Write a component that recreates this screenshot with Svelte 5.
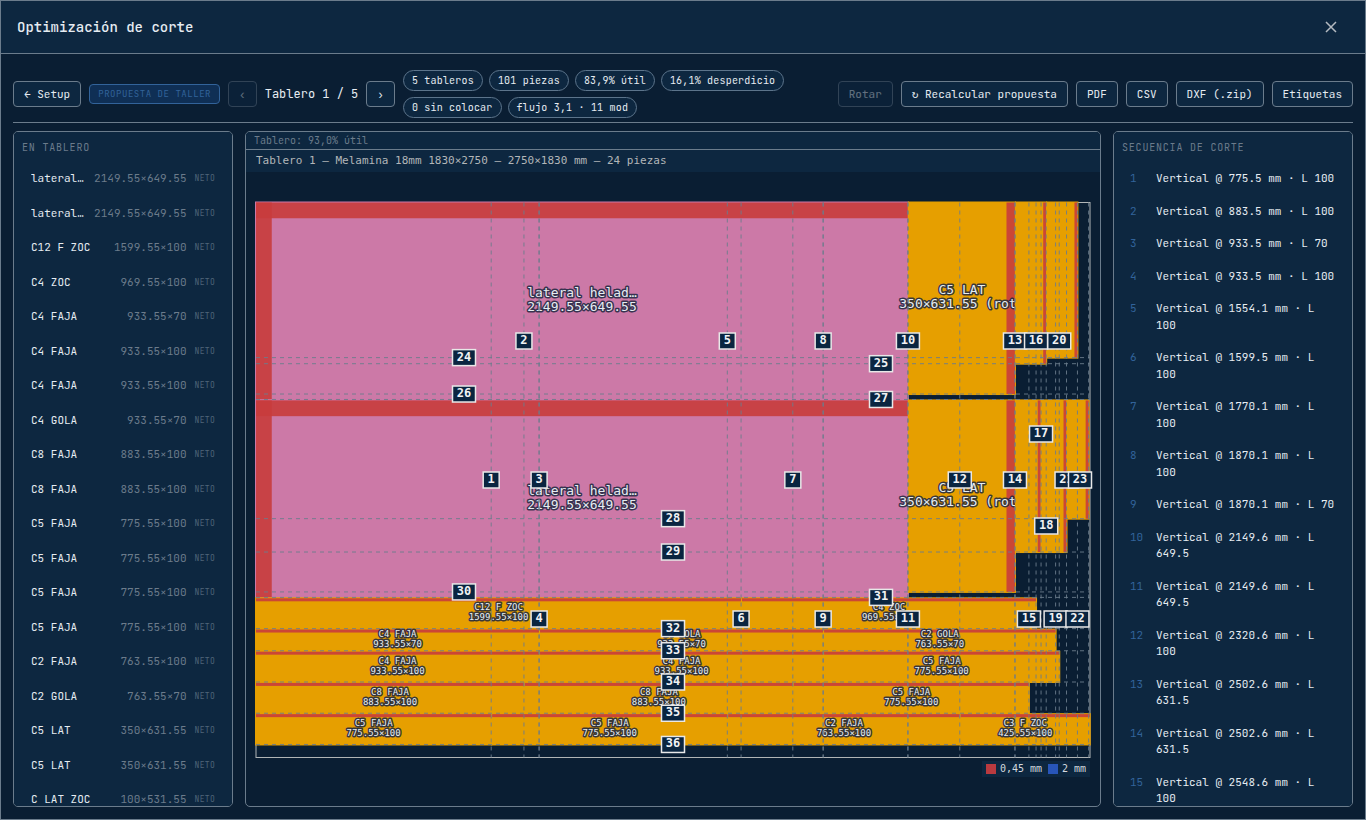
<script lang="ts">
type Piece = { x: number; y: number; w: number; h: number; edge: string; label?: string[]; side?: boolean };
type Cut = { axis: "v" | "h"; pos: number; bx: number; by: number };

const chips = ["5 tableros", "101 piezas", "83,9% útil", "16,1% desperdicio", "0 sin colocar", "flujo 3,1 · 11 mod"];

const items: [string, string][] = [
  ["lateral heladera", "2149.55×649.55"],
  ["lateral heladera", "2149.55×649.55"],
  ["C12 F ZOC", "1599.55×100"],
  ["C4 ZOC", "969.55×100"],
  ["C4 FAJA", "933.55×70"],
  ["C4 FAJA", "933.55×100"],
  ["C4 FAJA", "933.55×100"],
  ["C4 GOLA", "933.55×70"],
  ["C8 FAJA", "883.55×100"],
  ["C8 FAJA", "883.55×100"],
  ["C5 FAJA", "775.55×100"],
  ["C5 FAJA", "775.55×100"],
  ["C5 FAJA", "775.55×100"],
  ["C5 FAJA", "775.55×100"],
  ["C2 FAJA", "763.55×100"],
  ["C2 GOLA", "763.55×70"],
  ["C5 LAT", "350×631.55"],
  ["C5 LAT", "350×631.55"],
  ["C LAT ZOC", "100×531.55"],
];

const steps = [
  "775.5 mm · L 100",
  "883.5 mm · L 100",
  "933.5 mm · L 70",
  "933.5 mm · L 100",
  "1554.1 mm · L 100",
  "1599.5 mm · L 100",
  "1770.1 mm · L 100",
  "1870.1 mm · L 100",
  "1870.1 mm · L 70",
  "2149.6 mm · L 649.5",
  "2149.6 mm · L 649.5",
  "2320.6 mm · L 100",
  "2502.6 mm · L 631.5",
  "2502.6 mm · L 631.5",
  "2548.6 mm · L 100",
];

// board geometry, in mm
const BOARD_W = 2750;
const BOARD_H = 1830;
const KERF = 3;
const scale = 834 / BOARD_W;
const px = (mm: number) => 10 + mm * scale;
const py = (mm: number) => 52.5 + mm * scale;

function strip(y: number, h: number, parts: [string, number][]): Piece[] {
  let x = 0;
  return parts.map(([name, w]) => {
    const piece = { x, y, w, h, edge: "top", label: [name, `${w}×${h}`] };
    x += w + KERF;
    return piece;
  });
}

const rotated = ["C5 LAT", "350×631.55 (rot…"];

const pieces: Piece[] = [
  { x: 0, y: 0, w: 2149.55, h: 649.55, edge: "both", label: ["lateral helad…", "2149.55×649.55"], side: true },
  { x: 0, y: 652.55, w: 2149.55, h: 649.55, edge: "both", label: ["lateral helad…", "2149.55×649.55"], side: true },
  { x: 2152.6, y: 0, w: 350, h: 631.55, edge: "right", label: rotated },
  { x: 2152.6, y: 652.55, w: 350, h: 631.55, edge: "right", label: rotated },
  { x: 2505.6, y: 0, w: 100, h: 531.55, edge: "right" },
  { x: 2608.6, y: 0, w: 100, h: 511.55, edge: "right" },
  { x: 2505.6, y: 652.55, w: 82, h: 500, edge: "right" },
  { x: 2590.6, y: 652.55, w: 82, h: 500, edge: "right" },
  { x: 2675.6, y: 652.55, w: 70, h: 390, edge: "right" },
  ...strip(1305.1, 100, [["C12 F ZOC", 1599.55], ["C4 ZOC", 969.55]]),
  ...strip(1408.1, 70, [["C4 FAJA", 933.55], ["C4 GOLA", 933.55], ["C2 GOLA", 763.55]]),
  ...strip(1481.1, 100, [["C4 FAJA", 933.55], ["C4 FAJA", 933.55], ["C5 FAJA", 775.55]]),
  ...strip(1584.1, 100, [["C8 FAJA", 883.55], ["C8 FAJA", 883.55], ["C5 FAJA", 775.55]]),
  ...strip(1687.1, 100, [["C5 FAJA", 775.55], ["C5 FAJA", 775.55], ["C2 FAJA", 763.55], ["C3 F ZOC", 425.55]]),
];

function v(pos: number, by: number, bx = px(pos)): Cut {
  return { axis: "v", pos, bx, by };
}

function h(pos: number, bx: number): Cut {
  return { axis: "h", pos, bx, by: py(pos) };
}

// badge rows and columns on the drawing
const TOP = 191;
const MID = 330;
const LOW = 469;
const LEFT = 218;
const CENTER = 427;
const RIGHT = 635;

const cuts: Cut[] = [
  v(775.5, MID),
  v(883.5, TOP),
  v(933.5, MID),
  v(933.5, LOW),
  v(1554.1, TOP),
  v(1599.5, LOW),
  v(1770.1, MID),
  v(1870.1, TOP),
  v(1870.1, LOW),
  v(2149.6, TOP),
  v(2149.6, LOW),
  v(2320.6, MID),
  v(2502.6, TOP),
  v(2502.6, MID),
  v(2548.6, LOW),
  v(2572.1, TOP),
  v(2588.6, 284),
  v(2605.6, 376),
  v(2636.6, LOW),
  v(2648.6, TOP),
  v(2672.6, MID),
  v(2708.6, LOW),
  v(2745.6, MID, 834),
  h(511.5, LEFT),
  h(531.5, RIGHT),
  h(631.5, LEFT),
  h(649.5, RIGHT),
  h(1042.5, CENTER),
  h(1152.5, CENTER),
  h(1284.1, LEFT),
  h(1302.1, RIGHT),
  h(1405.1, CENTER),
  h(1478.1, CENTER),
  h(1581.1, CENTER),
  h(1684.1, CENTER),
  h(1787.1, CENTER),
];

const band = (p: Piece) => Math.max(3, Math.min(p.w, p.h) * scale * 0.08);
const badgeWidth = (n: number) => (n > 9 ? 23 : 16);
</script>

<div class="modal" role="dialog" aria-labelledby="modal-title">
  <header class="head">
    <h1 id="modal-title">Optimización de corte</h1>
    <button class="close" aria-label="Cerrar">
      <svg viewBox="0 0 12 12" width="12" height="12"><path d="M1 1 11 11M11 1 1 11" /></svg>
    </button>
  </header>

  <div class="body">
    <div class="toolbar">
      <button class="btn">← Setup</button>
      <span class="tag">Propuesta de taller</span>
      <button class="btn" disabled aria-label="Tablero anterior">‹</button>
      <span class="pager">Tablero 1 / 5</span>
      <button class="btn" aria-label="Tablero siguiente">›</button>
      <div class="chips">
        {#each chips as chip}
          <span class="chip">{chip}</span>
        {/each}
      </div>
      <button class="btn" disabled>Rotar</button>
      <button class="btn">↻ Recalcular propuesta</button>
      <button class="btn">PDF</button>
      <button class="btn">CSV</button>
      <button class="btn">DXF (.zip)</button>
      <button class="btn">Etiquetas</button>
    </div>

    <main class="columns">
      <aside class="panel">
        <h2>En tablero</h2>
        <ul class="items">
          {#each items as [name, size]}
            <li>
              <span class="name">{name}</span>
              <span class="size">{size}</span>
              <span class="net">NETO</span>
            </li>
          {/each}
        </ul>
      </aside>

      <section class="board">
        <div class="usage">Tablero: 93,0% útil</div>
        <svg class="drawing" viewBox="0 0 854 656" role="img" aria-label="Plano de corte del tablero 1">
          <rect class="strip" x="0" y="0" width="854" height="22" />
          <text class="caption" x="10" y="14">Tablero 1 — Melamina 18mm 1830×2750 — 2750×1830 mm — 24 piezas</text>

          <rect class="outline" x={px(0)} y={py(0)} width={BOARD_W * scale} height={BOARD_H * scale} />

          {#each pieces as p}
            {@const b = band(p)}
            {@const w = p.w * scale}
            {@const ht = p.h * scale}
            {@const cx = px(p.x) + w / 2}
            {@const cy = py(p.y) + ht / 2}
            <rect class={p.side ? "piece side" : "piece"} x={px(p.x)} y={py(p.y)} width={w} height={ht} />
            {#if p.edge !== "right"}
              <rect class="edge" x={px(p.x)} y={py(p.y)} width={w} height={b} />
            {/if}
            {#if p.edge === "both"}
              <rect class="edge" x={px(p.x)} y={py(p.y)} width={b} height={ht} />
            {/if}
            {#if p.edge === "right"}
              <rect class="edge" x={px(p.x) + w - b} y={py(p.y)} width={b} height={ht} />
            {/if}
            {#if p.label}
              {@const big = p.h > 200}
              <text class={big ? "label" : "label small"} x={cx} y={cy - (big ? 4 : 3)}>{p.label[0]}</text>
              <text class={big ? "label" : "label small"} x={cx} y={cy + (big ? 10 : 7)}>{p.label[1]}</text>
            {/if}
          {/each}

          {#each cuts as cut}
            {#if cut.axis === "v"}
              <line class="cut" x1={px(cut.pos)} x2={px(cut.pos)} y1={py(0)} y2={py(BOARD_H)} />
            {:else}
              <line class="cut" x1={px(0)} x2={px(BOARD_W)} y1={py(cut.pos)} y2={py(cut.pos)} />
            {/if}
          {/each}

          {#each cuts as cut, i}
            {@const bw = badgeWidth(i + 1)}
            <rect class="badge" x={cut.bx - bw / 2} y={cut.by - 8} width={bw} height="16" />
            <text class="number" x={cut.bx} y={cut.by + 3}>{i + 1}</text>
          {/each}

          <rect class="strip" x="736" y="611" width="108" height="16" />
          <rect class="key-thin" x="740" y="614" width="10" height="10" />
          <text class="key" x="754" y="622">0,45 mm</text>
          <rect class="key-thick" x="802" y="614" width="10" height="10" />
          <text class="key" x="816" y="622">2 mm</text>
        </svg>
      </section>

      <aside class="panel">
        <h2>Secuencia de corte</h2>
        <ol class="steps">
          {#each steps as step, i}
            <li>
              <span class="index">{i + 1}</span>
              <span>Vertical @ {step}</span>
            </li>
          {/each}
        </ol>
      </aside>
    </main>
  </div>
</div>

<style>
  :global(body) {
    background: #0a1e33;
  }

  .modal {
    --bg: #0a1e33;
    --surface: #0d2740;
    --line: #6b7c8c;
    --text: #e6ecf2;
    --muted: #6b7b8b;
    --blue: #32639a;
    --mono: "JetBrains Mono", "DejaVu Sans Mono", monospace;
    display: flex;
    flex-direction: column;
    box-sizing: border-box;
    height: 100vh;
    border: 1px solid var(--line);
    background: var(--bg);
    color: var(--text);
    font-family: var(--mono);
    font-size: 11px;
    line-height: 1.5;
  }

  .head {
    display: flex;
    align-items: center;
    justify-content: space-between;
    padding: 12px 16px;
    background: var(--surface);
    border-bottom: 1px solid var(--line);
  }

  h1 {
    margin: 0;
    font-size: 14px;
    font-weight: 500;
  }

  .close {
    display: grid;
    place-items: center;
    width: 36px;
    height: 28px;
    padding: 0;
    background: none;
    border: 0;
    cursor: pointer;
  }

  .close path {
    fill: none;
    stroke: #b4bac0;
    stroke-width: 1.5;
  }

  .body {
    flex: 1;
    display: flex;
    flex-direction: column;
    gap: 8px;
    min-height: 0;
    padding: 12px;
  }

  .toolbar {
    display: flex;
    align-items: center;
    gap: 8px;
    padding: 4px 0;
    border-bottom: 1px solid var(--line);
  }

  .btn {
    flex-shrink: 0;
    padding: 5px 10px;
    background: var(--surface);
    border: 1px solid var(--line);
    border-radius: 4px;
    color: var(--text);
    font: inherit;
    line-height: 14px;
    cursor: pointer;
  }

  .btn:disabled {
    opacity: 0.4;
    cursor: default;
  }

  .tag {
    flex-shrink: 0;
    padding: 2px 8px;
    background: #0f2f55;
    border: 1px solid var(--blue);
    border-radius: 4px;
    color: var(--blue);
    font-size: 9px;
    line-height: 14px;
    letter-spacing: 0.06em;
    text-transform: uppercase;
  }

  .pager {
    flex-shrink: 0;
    font-size: 12px;
  }

  .chips {
    flex: 1;
    display: flex;
    flex-wrap: wrap;
    gap: 6px;
  }

  .chip {
    padding: 3px 8px;
    background: var(--surface);
    border: 1px solid #5c748b;
    border-radius: 11px;
    font-size: 10px;
    line-height: 13px;
    letter-spacing: 0.02em;
  }

  .columns {
    flex: 1;
    display: grid;
    grid-template-columns: 220px 1fr 240px;
    grid-template-rows: minmax(0, 1fr);
    gap: 12px;
    min-height: 0;
  }

  .panel,
  .board {
    border: 1px solid var(--line);
    border-radius: 5px;
    overflow: hidden;
  }

  .panel {
    padding: 8px 8px 0;
    background: var(--surface);
    overflow-y: auto;
    scrollbar-width: none;
  }

  h2 {
    margin: 0 0 6px;
    color: var(--muted);
    font-size: 10px;
    font-weight: 400;
    letter-spacing: 0.08em;
    text-transform: uppercase;
  }

  ul,
  ol {
    margin: 0;
    padding: 0;
    list-style: none;
  }

  li {
    display: flex;
    gap: 8px;
    padding: 8px;
  }

  .items li {
    border: 1px solid transparent;
  }

  .steps {
    padding-top: 1px;
  }

  .name {
    flex: 1;
    min-width: 0;
    overflow: hidden;
    text-overflow: ellipsis;
    white-space: nowrap;
  }

  .size {
    color: var(--muted);
  }

  .net {
    align-self: center;
    color: #506579;
    font-size: 8px;
    letter-spacing: 0.04em;
  }

  .index {
    flex: 0 0 18px;
    color: var(--blue);
  }

  .board {
    display: flex;
    flex-direction: column;
  }

  .usage {
    padding: 1px 8px;
    background: var(--surface);
    border-bottom: 1px solid var(--line);
    color: var(--muted);
    font-size: 10px;
  }

  .drawing {
    flex: 1;
    width: 100%;
    min-height: 0;
    font-family: "DejaVu Sans Mono", monospace;
  }

  .strip {
    fill: var(--surface);
  }

  .caption {
    fill: #b2b6b8;
    font-size: 11px;
  }

  .outline {
    fill: none;
    stroke: #b2b6b8;
  }

  .piece {
    fill: #e69f00;
    stroke: #e69f00;
    stroke-width: 2;
  }

  .side {
    fill: #cc79a7;
    stroke: #cc79a7;
  }

  .edge {
    fill: #c83c3c;
    fill-opacity: 0.9;
  }

  .label {
    fill: #e6ecf2;
    stroke: #1c2740;
    stroke-width: 3;
    stroke-opacity: 0.85;
    stroke-linejoin: round;
    paint-order: stroke;
    font-size: 13px;
    text-anchor: middle;
  }

  .small {
    font-size: 9px;
  }

  .cut {
    stroke: #6b7c8c;
    stroke-opacity: 0.9;
    stroke-dasharray: 4 4;
  }

  .badge {
    fill: #0a2540;
    stroke: #e8e8e8;
    stroke-width: 1.5;
  }

  .number {
    fill: #f0f2f4;
    font-size: 12px;
    font-weight: 700;
    text-anchor: middle;
  }

  .key {
    fill: #d3d9df;
    font-size: 10px;
  }

  .key-thin {
    fill: #b93a3f;
  }

  .key-thick {
    fill: #2855b8;
  }
</style>
